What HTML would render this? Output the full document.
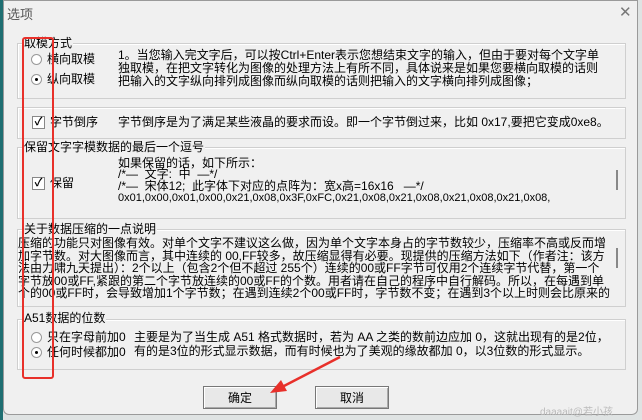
<!DOCTYPE html>
<html><head><meta charset="utf-8"><style>
body{margin:0;width:642px;height:420px;overflow:hidden;background:#dfe3e3;position:relative;font-family:"Liberation Sans","Noto Sans CJK SC",sans-serif;font-size:12px;color:#000}
.dlg{position:absolute;left:3px;top:0;width:635px;height:415px;background:#f0f0f0;border:1px solid #9a9a9a;border-radius:0 0 6px 6px;box-sizing:border-box}
.a{position:absolute;white-space:nowrap;line-height:13px}
.g{position:absolute;border:1px solid #cfcfcf;box-shadow:inset 1px 1px 0 #fff}
.lab{position:absolute;background:#f0f0f0;padding:0 1px;line-height:13px}
.r{position:absolute;width:11px;height:11px;border-radius:50%;border:1px solid #999;background:#fff;box-sizing:border-box}
.r.on::after{content:"";position:absolute;left:3px;top:3px;width:3px;height:3px;border-radius:50%;background:#000}
.c{position:absolute;width:13px;height:13px;border:1px solid #888;background:#fff;box-sizing:border-box;font-size:11px;line-height:11px;text-align:center;font-weight:bold}
.btn{position:absolute;width:74px;height:23px;border:1px solid #777;background:#e8e8e8;box-shadow:inset 1px 1px 0 #fff,inset -1px -1px 0 #aaa;text-align:center;line-height:22px;box-sizing:border-box}
.sb{position:absolute;width:2px;background:#888}
</style></head><body>
<div style="position:absolute;left:0;top:0;width:3px;height:420px;background:#1f6f72"></div>
<div class="dlg"></div>
<div class="a" style="left:7px;top:8px;color:#555;font-size:13px">选项</div>
<div class="a" style="left:619px;top:6px;color:#777;font-size:15px">✕</div>

<div class="g" style="left:17px;top:43px;width:607px;height:54px"></div>
<div class="lab" style="left:23px;top:37px">取模方式</div>
<div class="r" style="left:31px;top:54px"></div><div class="a" style="left:47px;top:53px">横向取模</div>
<div class="r on" style="left:31px;top:74px"></div><div class="a" style="left:47px;top:73px">纵向取模</div>
<div class="a" style="left:118px;top:49px">1。当您输入完文字后，可以按Ctrl+Enter表示您想结束文字的输入，但由于要对每个文字单</div>
<div class="a" style="left:118px;top:62px">独取模，在把文字转化为图像的处理方法上有所不同，具体说来是如果您要横向取模的话则</div>
<div class="a" style="left:118px;top:75px">把输入的文字纵向排列成图像而纵向取模的话则把输入的文字横向排列成图像；</div>

<div class="g" style="left:17px;top:107px;width:607px;height:30px"></div>
<div class="c" style="left:32px;top:116px">✓</div><div class="a" style="left:50px;top:116px">字节倒序</div>
<div class="a" style="left:118px;top:116px">字节倒序是为了满足某些液晶的要求而设。即一个字节倒过来，比如 0x17,要把它变成0xe8。</div>

<div class="g" style="left:17px;top:147px;width:607px;height:70px"></div>
<div class="lab" style="left:23px;top:141px">保留文字字模数据的最后一个逗号</div>
<div class="c" style="left:32px;top:177px">✓</div><div class="a" style="left:50px;top:177px">保留</div>
<div class="a" style="left:118px;top:157px">如果保留的话，如下所示：</div>
<div class="a" style="left:118px;top:168px">/*—&nbsp;&nbsp;文字:&nbsp;&nbsp;中&nbsp;&nbsp;—*/</div>
<div class="a" style="left:118px;top:180px">/*—&nbsp;&nbsp;宋体12;&nbsp;&nbsp;此字体下对应的点阵为：宽x高=16x16&nbsp;&nbsp;&nbsp;—*/</div>
<div class="a" style="left:118px;top:192px;font-size:11px">0x01,0x00,0x01,0x00,0x21,0x08,0x3F,0xFC,0x21,0x08,0x21,0x08,0x21,0x08,0x21,0x08,</div>
<div class="sb" style="left:616px;top:170px;height:20px"></div>

<div class="g" style="left:17px;top:229px;width:607px;height:76px"></div>
<div class="lab" style="left:23px;top:223px">关于数据压缩的一点说明</div>
<div class="a" style="left:18px;top:237px">压缩的功能只对图像有效。对单个文字不建议这么做，因为单个文字本身占的字节数较少，压缩率不高或反而增</div>
<div class="a" style="left:18px;top:250px">加字节数。对大图像而言，其中连续的 00,FF较多，故压缩显得有必要。现提供的压缩方法如下（作者注：该方</div>
<div class="a" style="left:18px;top:262px">法由力啸九天提出）：2个以上（包含2个但不超过 255个）连续的00或FF字节可仅用2个连续字节代替，第一个</div>
<div class="a" style="left:18px;top:275px">字节放00或FF,紧跟的第二个字节放连续的00或FF的个数。用者请在自己的程序中自行解码。所以，在每遇到单</div>
<div class="a" style="left:18px;top:287px">个的00或FF时，会导致增加1个字节数；在遇到连续2个00或FF时，字节数不变；在遇到3个以上时则会比原来的</div>
<div class="sb" style="left:616px;top:248px;height:20px"></div>

<div class="g" style="left:17px;top:319px;width:607px;height:49px"></div>
<div class="lab" style="left:23px;top:312px">A51数据的位数</div>
<div class="r" style="left:31px;top:332px"></div><div class="a" style="left:47px;top:331px">只在字母前加0</div>
<div class="r on" style="left:31px;top:347px"></div><div class="a" style="left:47px;top:346px">任何时候都加0</div>
<div class="a" style="left:134px;top:331px">主要是为了当生成 A51 格式数据时，若为 AA 之类的数前边应加 0，这就出现有的是2位，</div>
<div class="a" style="left:134px;top:345px">有的是3位的形式显示数据，而有时候也为了美观的缘故都加 0，以3位数的形式显示。</div>

<div class="btn" style="left:203px;top:386px">确定</div>
<div class="btn" style="left:315px;top:386px">取消</div>
<div class="a" style="left:540px;top:406px;color:#bbb;font-size:10px">daaaait@若小孩</div>

<div style="position:absolute;left:22px;top:37px;width:28px;height:338px;border:2px solid #e8302a;border-radius:3px"></div>
<svg style="position:absolute;left:0;top:0" width="642" height="420">
<line x1="340" y1="357" x2="282" y2="387" stroke="#e8302a" stroke-width="2.5"/>
<polygon points="270,393 281,380 287,391" fill="#e8302a"/>
</svg>
</body></html>
